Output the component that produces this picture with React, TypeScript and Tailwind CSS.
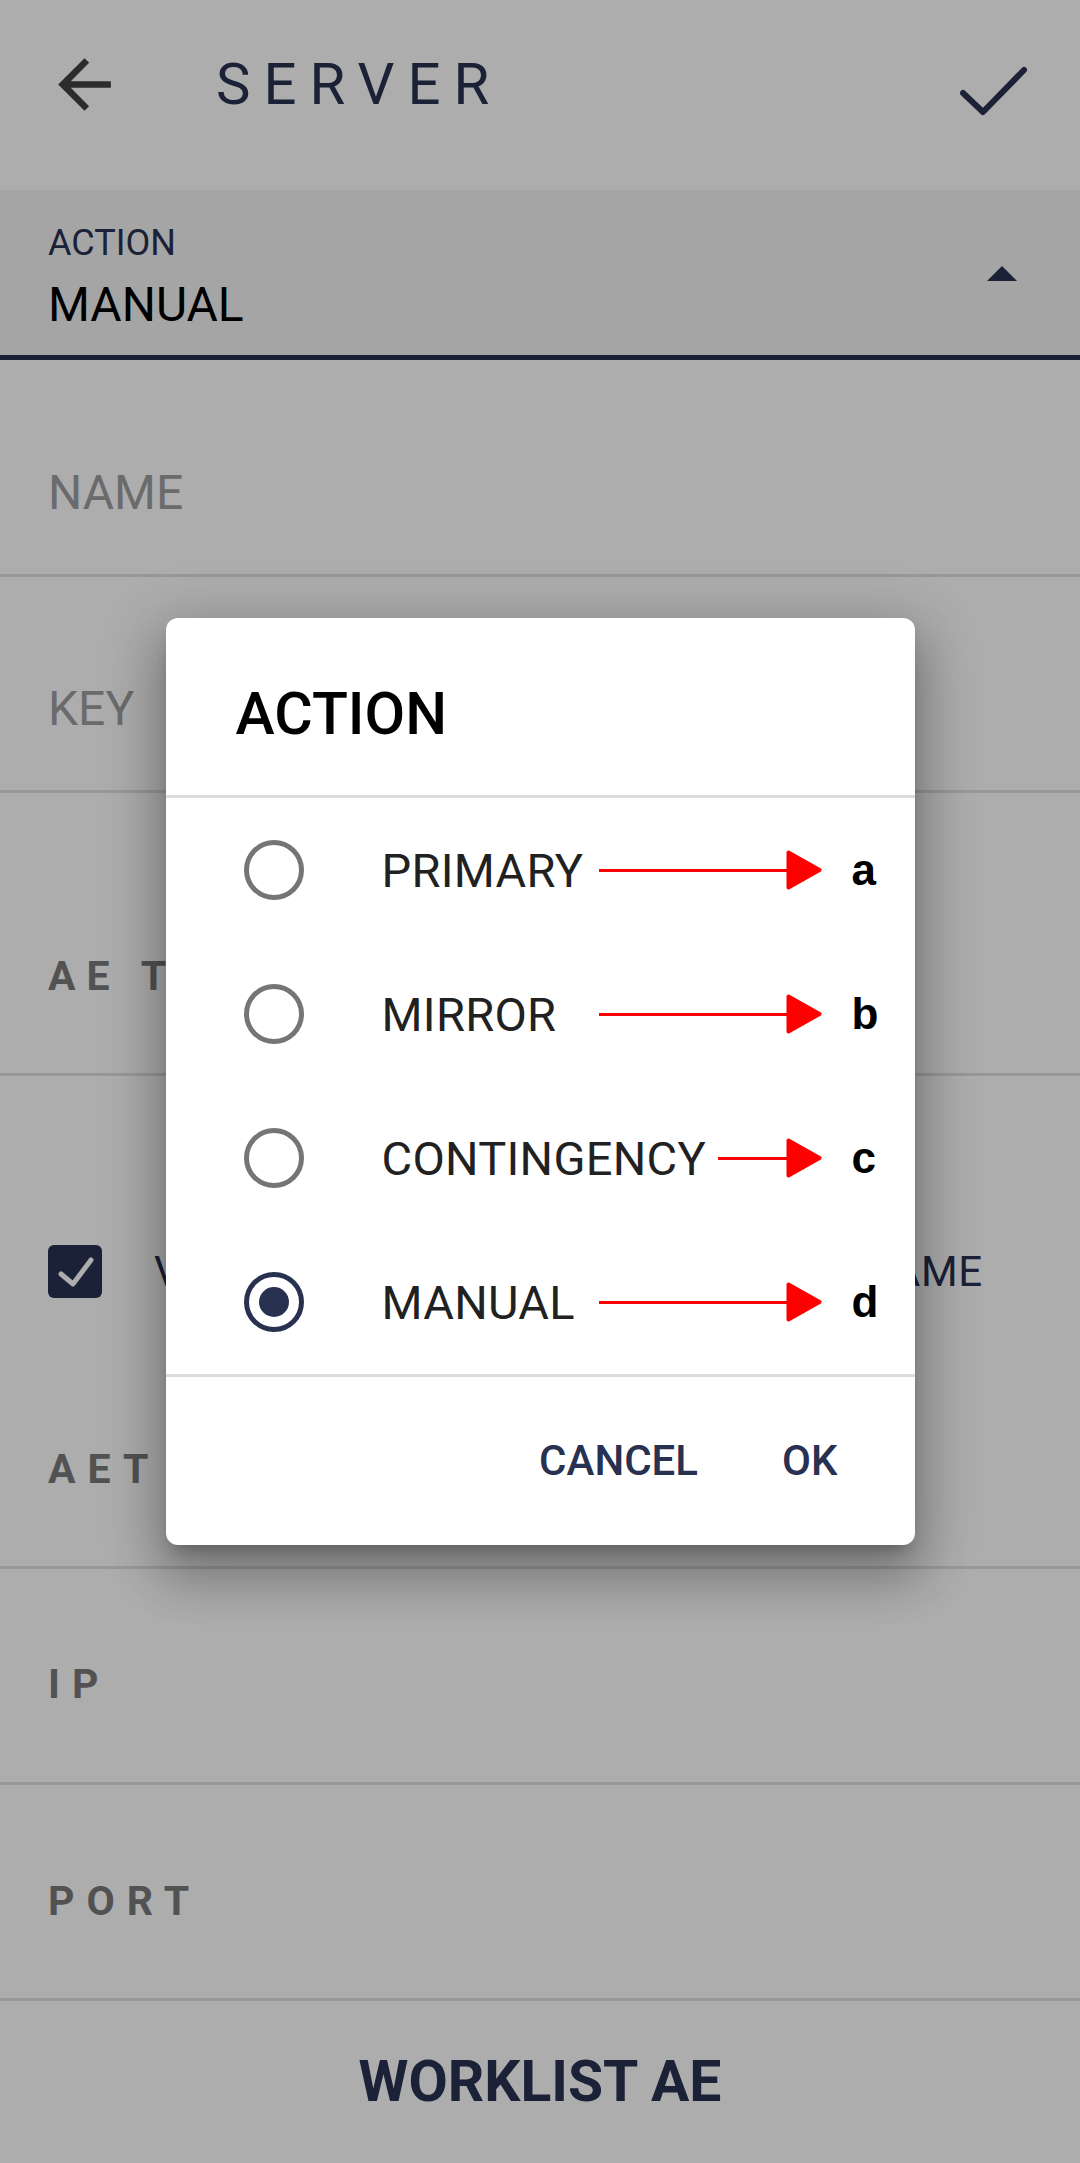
import { useState } from "react";

const NAVY = "#283150";

const options = [
  { label: "PRIMARY", tag: "a" },
  { label: "MIRROR", tag: "b" },
  { label: "CONTINGENCY", tag: "c" },
  { label: "MANUAL", tag: "d" },
];

function Radio({ checked }: { checked: boolean }) {
  return (
    <div
      className={`w-[60px] h-[60px] shrink-0 rounded-full border-[5px] flex items-center justify-center ${
        checked ? "border-[#283150]" : "border-[#757575]"
      }`}
    >
      {checked && <div className="w-[30px] h-[30px] rounded-full bg-[#283150]" />}
    </div>
  );
}

function RedArrow() {
  return (
    <div className="flex-1 flex items-center">
      <div className="flex-1 h-[3px] bg-[#ff0000] -mr-[4px]" />
      <svg width="36" height="40" viewBox="0 0 36 40" className="shrink-0">
        <path d="M2.5 2.5 L33.5 20 L2.5 37.5 Z" fill="#ff0000" stroke="#ff0000" strokeWidth="4" strokeLinejoin="round" />
      </svg>
    </div>
  );
}

export default function App() {
  const [selected, setSelected] = useState("MANUAL");

  return (
    <div className="relative min-h-[2163px] bg-white font-['Roboto',sans-serif] overflow-hidden">
      {/* Header */}
      <div className="h-[190px]">
        <div className="h-[168px] flex items-center pl-[45px] pr-[48px]">
          <svg width="79" height="79" viewBox="0 0 24 24" className="shrink-0">
            <path d="M20 11H7.83l5.59-5.59L12 4l-8 8 8 8 1.41-1.41L7.83 13H20v-2z" fill="#424242" />
          </svg>
          <span className="ml-[92px] text-[58px] leading-none tracking-[13px] text-[#283150]">SERVER</span>
          <svg width="77" height="58" viewBox="0 0 77 58" className="ml-auto mt-[14px]">
            <polyline points="8,31 28,50 69,8" fill="none" stroke={NAVY} strokeWidth="6" strokeLinecap="round" strokeLinejoin="round" />
          </svg>
        </div>
      </div>

      {/* Action select */}
      <div className="h-[170px] bg-[#f4f4f4] border-b-[5px] border-[#283150] flex items-center justify-between pl-[48px] pr-[63px] pt-[8px]">
        <div className="flex flex-col">
          <span className="text-[36px] leading-none text-[#283150]">ACTION</span>
          <span className="mt-[20px] text-[48px] leading-none text-black">MANUAL</span>
        </div>
        <svg width="30" height="15" viewBox="0 0 30 15" className="-mt-[6px]">
          <polygon points="0,15 15,0 30,15" fill={NAVY} />
        </svg>
      </div>

      {/* Text fields */}
      <div className="h-[217px] border-b-[3px] border-[#e0e0e0] pl-[48px] pt-[109px]">
        <span className="text-[48px] leading-none text-[#9e9e9e]">NAME</span>
      </div>
      <div className="h-[216px] border-b-[3px] border-[#e0e0e0] pl-[48px] pt-[108px]">
        <span className="text-[48px] leading-none text-[#9e9e9e]">KEY</span>
      </div>
      <div className="h-[283px] border-b-[3px] border-[#e0e0e0] pl-[48px] pt-[163px]">
        <span className="text-[41px] leading-none font-bold tracking-[11px] text-[#7a7a7a]">AE TITLE</span>
      </div>
      <div className="h-[493px] border-b-[3px] border-[#e0e0e0] pl-[48px] pt-[169px] flex flex-col">
        <div className="flex items-center h-[53px]">
          <div className="w-[54px] h-[53px] rounded-[6px] bg-[#283150] flex items-center justify-center shrink-0">
            <svg width="40" height="34" viewBox="0 0 40 34">
              <polyline points="6,19 18,29 36,5" fill="none" stroke="white" strokeWidth="5" strokeLinecap="round" strokeLinejoin="round" />
            </svg>
          </div>
          <span className="ml-[52px] text-[42px] leading-none tracking-[0.75px] text-[#283150] whitespace-nowrap">
            VERIFY SERVER CERTIFICATE HOST NAME
          </span>
        </div>
        <span className="mt-[151px] text-[41px] leading-none font-bold tracking-[12px] text-[#7a7a7a]">AET</span>
      </div>
      <div className="h-[216px] border-b-[3px] border-[#e0e0e0] pl-[48px] pt-[95px]">
        <span className="text-[41px] leading-none font-bold tracking-[12px] text-[#7a7a7a]">IP</span>
      </div>
      <div className="h-[216px] border-b-[3px] border-[#e0e0e0] pl-[48px] pt-[96px]">
        <span className="text-[41px] leading-none font-bold tracking-[12px] text-[#7a7a7a]">PORT</span>
      </div>
      <div className="pt-[52px] flex justify-center">
        <span className="text-[57px] leading-none font-bold text-[#283150]">WORKLIST AE</span>
      </div>

      {/* Dialog overlay */}
      <div className="absolute inset-0 bg-black/[0.32] flex items-center justify-center">
        <div className="w-[749px] bg-white rounded-[12px] shadow-[0_11px_15px_-7px_rgba(0,0,0,0.25),0_30px_48px_6px_rgba(0,0,0,0.2),0_12px_60px_12px_rgba(0,0,0,0.16)] flex flex-col">
          <div className="pt-[66px] pb-[52px] pl-[70px]">
            <span className="text-[59px] leading-none font-medium text-black">ACTION</span>
          </div>
          <div className="h-[3px] bg-[#dcdcdc]" />
          <div className="flex flex-col">
            {options.map((o) => (
              <div
                key={o.label}
                onClick={() => setSelected(o.label)}
                className="h-[144px] flex items-center pl-[78px] pr-[35px] cursor-pointer"
              >
                <Radio checked={selected === o.label} />
                <span className="ml-[78px] min-w-[205px] mr-[12px] text-[47px] leading-none tracking-[0.3px] text-[#212121] whitespace-nowrap">
                  {o.label}
                </span>
                <RedArrow />
                <span className="ml-[30px] w-[28px] text-[44px] leading-none font-bold text-black font-['Liberation_Sans',Arial,sans-serif]">
                  {o.tag}
                </span>
              </div>
            ))}
          </div>
          <div className="h-[3px] bg-[#dcdcdc]" />
          <div className="h-[168px] flex items-center justify-end gap-[84px] pr-[77px]">
            <button className="text-[42px] leading-none font-medium text-[#283150]">CANCEL</button>
            <button className="text-[42px] leading-none font-medium text-[#283150]">OK</button>
          </div>
        </div>
      </div>
    </div>
  );
}
